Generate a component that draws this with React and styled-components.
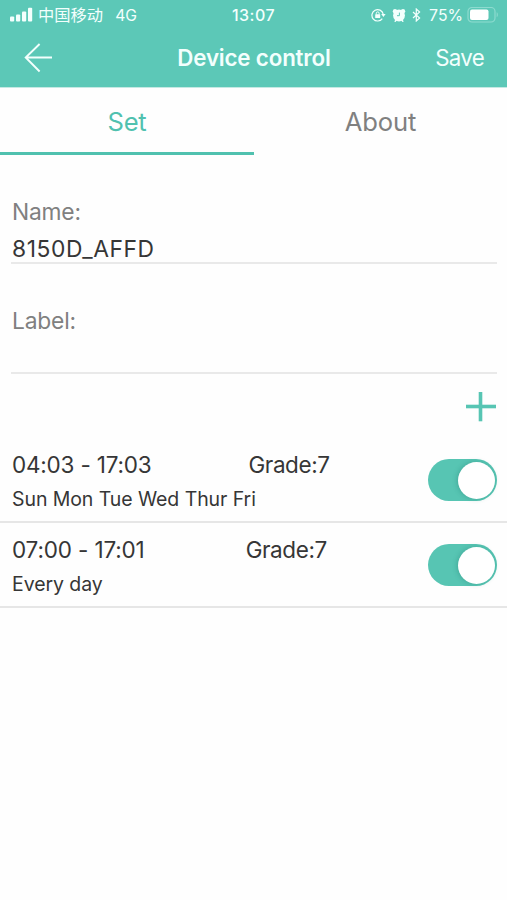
import { useState } from 'react';
import styled, { createGlobalStyle } from 'styled-components';

const GlobalStyle = createGlobalStyle`
  body {
    margin: 0;
    background-color: #fefefe;
    font-family: Inter, "Noto Sans CJK SC", sans-serif;
    color: #363636;
  }
`;

const Page = styled.div`
  width: 507px;
  min-height: 900px;
  background-color: #fefefe;
`;

const Header = styled.header`
  height: 87px;
  background-color: #5cc8b7;
  border-bottom: 1px solid #c5e9e3;
  color: #f3fffd;
`;

const StatusBar = styled.div`
  height: 29px;
  display: grid;
  grid-template-columns: 1fr auto 1fr;
  align-items: center;
  padding: 0 8px 0 10px;
  font-size: 16px;
  line-height: 29px;
`;

const StatusGroup = styled.div`
  display: flex;
  align-items: center;
  height: 29px;

  svg {
    display: block;
    flex: none;
  }
`;

const Carrier = styled.span`
  margin: 1px 12px 0 5px;
  font-size: 16.3px;
`;

const Network = styled.span`
  margin-top: 1px;
  font-size: 15.7px;
`;

const Clock = styled.span`
  margin: 1px 2px 0 0;
  font-size: 16px;
  font-weight: 500;
  letter-spacing: 0.5px;
`;

const StatusIcons = styled(StatusGroup)`
  justify-content: flex-end;
  gap: 6px;
`;

const Percent = styled.span`
  margin: 1px -2px 0 2px;
  font-size: 15.8px;
  letter-spacing: 0px;
`;

const NavBar = styled.div`
  height: 58px;
  display: grid;
  grid-template-columns: 1fr auto 1fr;
  align-items: center;
  padding: 0 23px 0 24px;
`;

const BackButton = styled.button`
  border: 0;
  padding: 0;
  background: none;
  color: inherit;
  justify-self: start;

  svg {
    display: block;
  }
`;

const Title = styled.h1`
  margin: 0;
  font-size: 22.3px;
  font-weight: 600;
  letter-spacing: -0.15px;
  line-height: 58px;
`;

const SaveButton = styled.button`
  border: 0;
  padding: 0;
  background: none;
  color: inherit;
  justify-self: end;
  font: 400 22.3px/58px Inter, sans-serif;
  letter-spacing: -0.7px;
`;

const Tabs = styled.nav`
  display: grid;
  grid-template-columns: 254px 253px;
`;

const Tab = styled.button`
  box-sizing: border-box;
  height: 67px;
  border: 0;
  border-bottom: 3px solid ${({ $active }) => ($active ? '#50c1af' : 'transparent')};
  padding: 4px 0 0;
  background: none;
  color: ${({ $active }) => ($active ? '#50c1af' : '#808080')};
  font: 400 25.6px/60px Inter, sans-serif;
  letter-spacing: ${({ $spacing }) => $spacing};
`;

const Field = styled.div`
  box-sizing: border-box;
  height: ${({ $height }) => $height};
  margin: 0 10px 0 11px;
  border-bottom: 2px solid #e9e9e9;
  display: flex;
  flex-direction: column;
  justify-content: flex-start;
  padding: 38px 0 0 1px;
`;

const FieldLabel = styled.label`
  height: 37px;
  color: #808080;
  font-size: 22.8px;
  line-height: 38px;
  letter-spacing: -0.2px;
`;

const FieldValue = styled.div`
  height: 32px;
  font-size: 22.8px;
  line-height: 37px;
  letter-spacing: 0.6px;
  white-space: nowrap;
`;

const AddRow = styled.div`
  height: 64px;
  display: flex;
  justify-content: flex-end;
  padding: 18px 11px 0 0;
  box-sizing: border-box;
`;

const AddButton = styled.button`
  height: 30px;
  border: 0;
  padding: 0;
  background: none;

  svg {
    display: block;
  }
`;

const ScheduleRow = styled.div`
  box-sizing: border-box;
  height: 85px;
  border-bottom: 2px solid #e6e6e6;
  display: flex;
  align-items: center;
  justify-content: space-between;
  padding: 1px 10px 0 12px;
`;

const ScheduleInfo = styled.div`
  display: flex;
  flex-direction: column;
  padding-top: 2px;
`;

const ScheduleTop = styled.div`
  display: flex;
  align-items: center;
  gap: ${({ $gap }) => $gap};
  height: 35px;
  font-size: 22.5px;
  white-space: nowrap;
`;

const Time = styled.span`
  letter-spacing: ${({ $spacing }) => $spacing};
`;

const Grade = styled.span`
  letter-spacing: -0.4px;
`;

const Days = styled.div`
  height: 34px;
  font-size: 19.5px;
  line-height: 35px;
  letter-spacing: -0.08px;
`;

const Toggle = styled.button`
  box-sizing: border-box;
  width: 69px;
  height: 42px;
  border: 0;
  border-radius: 21px;
  padding: 0 2px;
  display: flex;
  align-items: center;
  justify-content: ${({ $on }) => ($on ? 'flex-end' : 'flex-start')};
  background-color: ${({ $on }) => ($on ? '#57c5b3' : '#dddddd')};
`;

const Knob = styled.span`
  width: 37px;
  height: 37px;
  border-radius: 50%;
  background-color: #ffffff;
  box-shadow: -1px 0 5px rgba(20, 110, 95, 0.3);
`;

const SignalIcon = () => (
  <svg width="23" height="16" viewBox="0 0 23 16" fill="currentColor">
    <rect x="0" y="9.5" width="4.2" height="5" rx="1" />
    <rect x="6" y="7.5" width="4.2" height="7" rx="1" />
    <rect x="12" y="4.5" width="4.2" height="10" rx="1" />
    <rect x="18" y="0.8" width="4.2" height="13.7" rx="1" />
  </svg>
);

const RotationLockIcon = () => (
  <svg width="15" height="14" viewBox="0 0 15 14" fill="none" stroke="currentColor">
    <path d="M11.3 10.6A5.7 5.7 0 1 1 12.2 6" strokeWidth="1.2" />
    <path d="M10.2 6h4.4l-2.2 3.1z" fill="currentColor" stroke="none" />
    <rect x="4.2" y="6.2" width="5" height="3.8" rx="0.5" fill="currentColor" stroke="none" />
    <path d="M5.3 6.5V5.3a1.4 1.4 0 0 1 2.8 0v1.2" strokeWidth="1" />
  </svg>
);

const AlarmIcon = () => (
  <svg width="14" height="15" viewBox="0 0 14 15">
    <g fill="currentColor">
      <circle cx="7" cy="7.5" r="5.9" />
      <circle cx="3" cy="3.2" r="2.2" />
      <circle cx="11" cy="3.2" r="2.2" />
      <path d="M2.2 13.4l1.6-2.3 1.4 1-1.6 1.9zM11.8 13.4l-1.6-2.3-1.4 1 1.6 1.9z" />
    </g>
    <path d="M7.4 4.6v3.1H5" fill="none" stroke="#5cc8b7" strokeWidth="1" />
  </svg>
);

const BluetoothIcon = () => (
  <svg width="9" height="14" viewBox="0 0 9 14" fill="none" stroke="currentColor" strokeWidth="1.2">
    <path d="M1 4l6.6 6-3.3 3V1l3.3 3L1 10" />
  </svg>
);

const BatteryIcon = () => (
  <svg width="32" height="17" viewBox="0 0 32 17">
    <rect x="1" y="0.5" width="27" height="14.5" rx="4" fill="none" stroke="#8ddbcf" strokeWidth="1.2" />
    <rect x="3" y="2.5" width="18.5" height="10.5" rx="2" fill="#ffffff" />
    <path d="M29.7 5.3c1.5.6 1.5 4.3 0 5z" fill="#8ddbcf" />
  </svg>
);

const BackIcon = () => (
  <svg width="30" height="30" viewBox="0 0 30 30" fill="none" stroke="currentColor" strokeWidth="1.9">
    <path d="M15.6 1L1.7 14.5l13.9 14M1.7 14.5H28" />
  </svg>
);

const PlusIcon = () => (
  <svg width="30" height="30" viewBox="0 0 30 30" fill="#57c5b3">
    <rect x="0" y="12.7" width="30" height="3.6" />
    <rect x="12.7" y="0" width="3.6" height="29.3" />
  </svg>
);

const initialSchedules = [
  { time: '04:03 - 17:03', grade: 7, days: 'Sun Mon Tue Wed Thur Fri', on: true, spacing: '-0.2px', gap: '97px' },
  { time: '07:00 - 17:01', grade: 7, days: 'Every day', on: true, spacing: '-0.15px', gap: '101px' },
];

const App = () => {
  const [tab, setTab] = useState('Set');
  const [schedules, setSchedules] = useState(initialSchedules);

  const toggleSchedule = (target) => {
    setSchedules(schedules.map((item, index) => (index === target ? { ...item, on: !item.on } : item)));
  };

  return (
    <Page>
      <GlobalStyle />
      <Header>
        <StatusBar>
          <StatusGroup>
            <SignalIcon />
            <Carrier>中国移动</Carrier>
            <Network>4G</Network>
          </StatusGroup>
          <Clock>13:07</Clock>
          <StatusIcons>
            <RotationLockIcon />
            <AlarmIcon />
            <BluetoothIcon />
            <Percent>75%</Percent>
            <BatteryIcon />
          </StatusIcons>
        </StatusBar>
        <NavBar>
          <BackButton aria-label="Back"><BackIcon /></BackButton>
          <Title>Device control</Title>
          <SaveButton>Save</SaveButton>
        </NavBar>
      </Header>

      <Tabs>
        <Tab $active={tab === 'Set'} $spacing="-0.3px" onClick={() => setTab('Set')}>Set</Tab>
        <Tab $active={tab === 'About'} $spacing="-0.1px" onClick={() => setTab('About')}>About</Tab>
      </Tabs>

      <Field $height="109px">
        <FieldLabel>Name:</FieldLabel>
        <FieldValue>8150D_AFFD</FieldValue>
      </Field>
      <Field $height="110px">
        <FieldLabel>Label:</FieldLabel>
        <FieldValue />
      </Field>

      <AddRow>
        <AddButton aria-label="Add"><PlusIcon /></AddButton>
      </AddRow>

      {schedules.map((item, index) => (
        <ScheduleRow key={item.time}>
          <ScheduleInfo>
            <ScheduleTop $gap={item.gap}>
              <Time $spacing={item.spacing}>{item.time}</Time>
              <Grade>Grade:{item.grade}</Grade>
            </ScheduleTop>
            <Days>{item.days}</Days>
          </ScheduleInfo>
          <Toggle $on={item.on} aria-label={item.time} onClick={() => toggleSchedule(index)}>
            <Knob />
          </Toggle>
        </ScheduleRow>
      ))}
    </Page>
  );
};

export default App;
